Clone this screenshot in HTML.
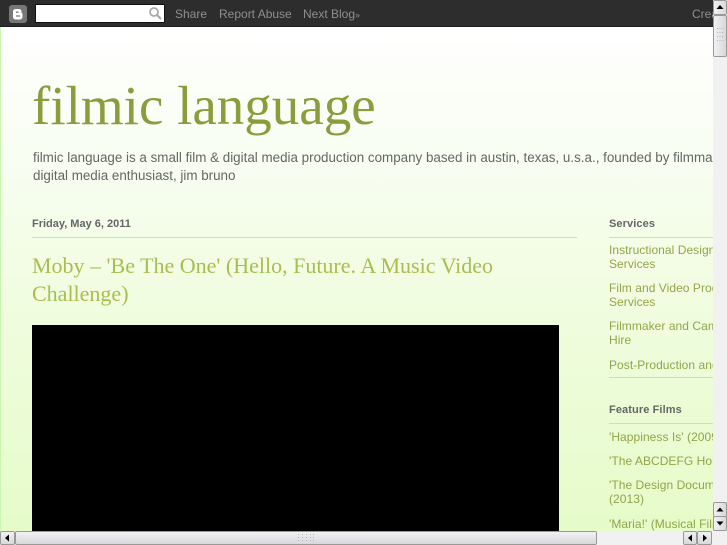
<!DOCTYPE html>
<html><head><meta charset="utf-8"><style>
html,body{margin:0;padding:0;width:727px;height:545px;overflow:hidden;background:#fff}
body{position:relative;font-family:"Liberation Sans",sans-serif}
.a{position:absolute;white-space:nowrap}
#clip{position:absolute;left:0;top:0;width:713px;height:531px;overflow:hidden;background:linear-gradient(#fff 27px,#f6fdee 190px,#f0fde0 300px,#e6fbc9 531px)}
#edge{position:absolute;left:0;top:27px;width:1px;height:504px;background:#c8f8b0}
#bar{position:absolute;left:0;top:0;width:713px;height:27px;background:#2d2d2d;border-bottom:1px solid #1c1c1c;box-sizing:border-box}
.nav{font-size:12px;color:#8f8f8f;top:7px}
.side{font-size:12px;color:#92a548;letter-spacing:.05px;line-height:14px}
.h{font-size:11px;font-weight:bold;color:#666;letter-spacing:.1px}
.rule{position:absolute;height:1px;background:#d5d9cd}
.sb{position:absolute;background:linear-gradient(#f2f2f4,#d8d8dc);border:1px solid #999;box-sizing:border-box;border-radius:2px}
.sv{position:absolute;background:linear-gradient(90deg,#f2f2f4,#d8d8dc);border:1px solid #999;box-sizing:border-box;border-radius:2px}
</style></head><body>
<div id="clip">
<div id="edge"></div>
<div id="bar"></div>
<svg class="a" style="left:9px;top:5px" width="18" height="18" viewBox="0 0 18 18"><rect width="18" height="18" rx="3" fill="#777"/><path d="M6.5 4h3.5a2.5 2.5 0 0 1 2.5 2.5v1.2l1 1V12a2.5 2.5 0 0 1-2.5 2.500H6.500A2.500 2.500 0 0 1 4 12V6.500A2.500 2.500 0 0 1 6.500 4z" fill="#fff"/><path d="M7 7.200h2.500M7 11h4" stroke="#777" stroke-width="1.300"/></svg>
<div class="a" style="left:35px;top:4px;width:130px;height:19px;background:#fff;border:1px solid #111;box-sizing:border-box;border-radius:1px"></div>
<svg class="a" style="left:148px;top:6px" width="14" height="14" viewBox="0 0 14 14"><circle cx="6" cy="6" r="4" fill="none" stroke="#aaa" stroke-width="1.800"/><path d="M9 9l4 4" stroke="#aaa" stroke-width="2.200"/></svg>
<div class="a nav" style="left:175px">Share</div>
<div class="a nav" style="left:219px">Report Abuse</div>
<div class="a nav" style="left:303px">Next Blog<span style="font-size:9px">»</span></div>
<div class="a nav" style="left:692px">Create Blog</div>
<div class="a" style="left:32px;top:76px;font:55px/60px 'Liberation Serif',serif;color:#8a9c3b">filmic language</div>
<div class="a" style="left:33px;top:149px;font-size:13.400px;line-height:18px;color:#666">filmic language is a small film &amp; digital media production company based in austin, texas, u.s.a., founded by filmmaker and<br>digital media enthusiast, jim bruno</div>
<div class="a h" style="left:32px;top:218px;letter-spacing:0">Friday, May 6, 2011</div>
<div class="rule" style="left:32px;top:237px;width:545px"></div>
<div class="a" style="left:32px;top:252px;font:22px/28px 'Liberation Serif',serif;color:#a6bf4e">Moby – 'Be The One' (Hello, Future. A Music Video<br>Challenge)</div>
<div class="a" style="left:32px;top:325px;width:527px;height:206px;background:#000"></div>
<div class="a h" style="left:609px;top:218px">Services</div>
<div class="rule" style="left:609px;top:237px;width:104px"></div>
<div class="a side" style="left:609px;top:243px">Instructional Design<br>Services</div>
<div class="a side" style="left:609px;top:281px">Film and Video Production<br>Services</div>
<div class="a side" style="left:609px;top:319px">Filmmaker and Camera<br>Hire</div>
<div class="a side" style="left:609px;top:358px">Post-Production and</div>
<div class="rule" style="left:609px;top:377px;width:104px"></div>
<div class="a h" style="left:609px;top:404px">Feature Films</div>
<div class="rule" style="left:609px;top:423px;width:104px"></div>
<div class="a side" style="left:609px;top:430px">'Happiness Is' (2009)</div>
<div class="a side" style="left:609px;top:454px">'The ABCDEFG Home</div>
<div class="a side" style="left:609px;top:478px">'The Design Document'<br>(2013)</div>
<div class="a side" style="left:609px;top:517px">'Maria!' (Musical Film)</div>
</div>

<div class="a" style="left:713px;top:0;width:14px;height:545px;background:#f1f1f1"></div>
<div class="a" style="left:0;top:531px;width:727px;height:14px;background:#f1f1f1"></div>
<div class="sv" style="left:713px;top:0;width:14px;height:15px"></div>
<svg class="a" style="left:713px;top:0" width="14" height="15"><path d="M3.500 9L7 5l3.500 4z" fill="#000"/></svg>
<div class="sv" style="left:713px;top:15px;width:14px;height:42px"></div>
<svg class="a" style="left:716px;top:27px" width="8" height="18" fill="#b5b5b8"><path d="M1 1h1v1H1zM3.500 1h1v1h-1zM6 1h1v1H6zM1 5h1v1H1zM3.500 5h1v1h-1zM6 5h1v1H6zM1 9h1v1H1zM3.500 9h1v1h-1zM6 9h1v1H6zM1 13h1v1H1zM3.500 13h1v1h-1zM6 13h1v1H6z"/></svg>
<div class="sv" style="left:713px;top:502px;width:14px;height:15px"></div>
<svg class="a" style="left:713px;top:502px" width="14" height="15"><path d="M3.500 9.500L7 5.500l3.500 4z" fill="#000"/></svg>
<div class="sv" style="left:713px;top:516px;width:14px;height:15px"></div>
<svg class="a" style="left:713px;top:516px" width="14" height="15"><path d="M3.500 5.500L7 9.500l3.500-4z" fill="#000"/></svg>

<div class="sb" style="left:0;top:531px;width:15px;height:14px"></div>
<svg class="a" style="left:0;top:531px" width="15" height="14"><path d="M9 3.500L5 7l4 3.500z" fill="#000"/></svg>
<div class="sb" style="left:15px;top:531px;width:582px;height:14px"></div>
<svg class="a" style="left:297px;top:533px" width="18" height="9" fill="#b5b5b8"><path d="M1 1h1v1H1zM5 1h1v1H5zM9 1h1v1H9zM13 1h1v1h-1zM16 1h1v1h-1zM1 4h1v1H1zM5 4h1v1H5zM9 4h1v1H9zM13 4h1v1h-1zM16 4h1v1h-1zM1 7h1v1H1zM5 7h1v1H5zM9 7h1v1H9zM13 7h1v1h-1zM16 7h1v1h-1z"/></svg>
<div class="sb" style="left:683px;top:531px;width:14px;height:14px"></div>
<svg class="a" style="left:683px;top:531px" width="14" height="14"><path d="M9 3.500L5 7l4 3.500z" fill="#000"/></svg>
<div class="sb" style="left:697px;top:531px;width:15px;height:14px"></div>
<svg class="a" style="left:697px;top:531px" width="15" height="14"><path d="M6 3.500L10 7l-4 3.500z" fill="#000"/></svg>
</body></html>
